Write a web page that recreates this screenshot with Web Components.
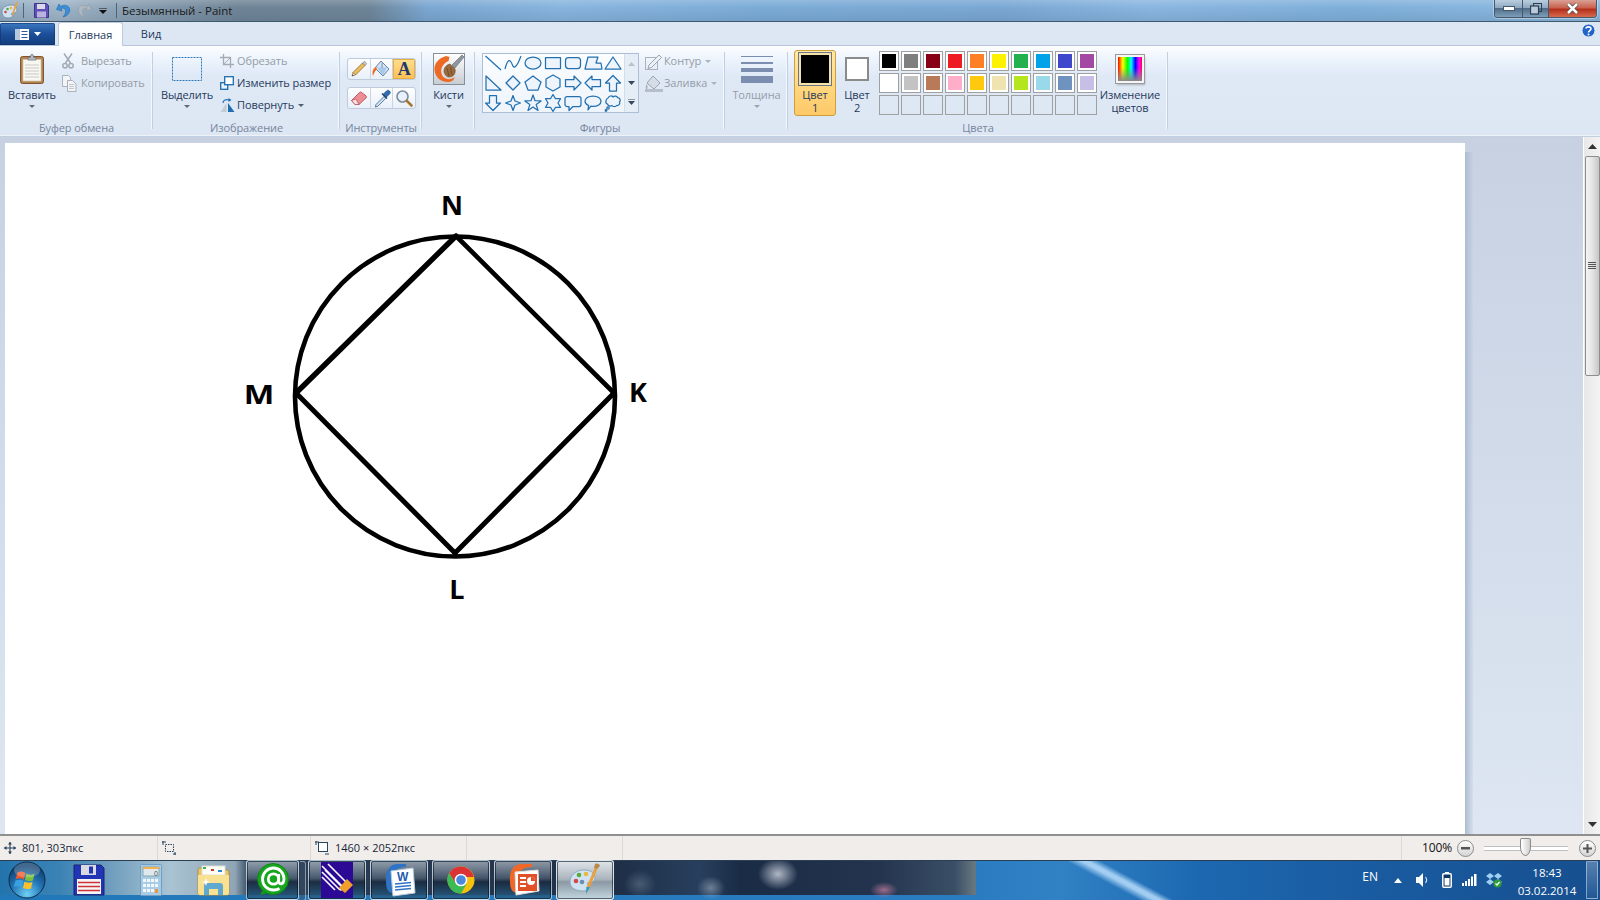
<!DOCTYPE html>
<html lang="ru"><head><meta charset="utf-8"><title>Paint</title>
<style>html,body{margin:0;padding:0;width:1600px;height:900px;overflow:hidden;background:#dde7f4}</style></head>
<body>
<paint-app>
  <title-bar></title-bar>
  <ribbon-tabs></ribbon-tabs>
  <paint-ribbon>
    <rb-group label="Буфер обмена" w="153" pad="8">
      <rb-big label="Вставить" w="48" arrow><x-icon name="paste"></x-icon></rb-big>
      <rb-col ml="6">
        <rb-small gap="3" off><x-icon name="cut"></x-icon>Вырезать</rb-small>
        <rb-small gap="3" off><x-icon name="copy"></x-icon>Копировать</rb-small>
      </rb-col>
    </rb-group>
    <rb-group label="Изображение" w="187" pad="8">
      <rb-big label="Выделить" w="52" arrow><x-icon name="select"></x-icon></rb-big>
      <rb-col ml="7">
        <rb-small off><x-icon name="crop"></x-icon>Обрезать</rb-small>
        <rb-small><x-icon name="resize"></x-icon>Изменить размер</rb-small>
        <rb-small drop><x-icon name="rotate"></x-icon>Повернуть</rb-small>
      </rb-col>
    </rb-group>
    <rb-group label="Инструменты" w="82" pad="7"><tool-grid></tool-grid></rb-group>
    <rb-group label="" w="53" pad="0"><rb-big label="Кисти" w="53" arrow><x-icon name="brush"></x-icon></rb-big></rb-group>
    <rb-group label="Фигуры" w="250" pad="7">
      <shape-gallery></shape-gallery>
      <rb-col ml="6">
        <rb-small gap="1" off drop><x-icon name="outline"></x-icon>Контур</rb-small>
        <rb-small gap="1" off drop><x-icon name="fill2"></x-icon>Заливка</rb-small>
      </rb-col>
    </rb-group>
    <rb-group label="" w="63" pad="0"><rb-big label="Толщина" w="63" arrow off><x-icon name="lines"></x-icon></rb-big></rb-group>
    <rb-group label="Цвета" w="380" pad="6">
      <rb-big label="Цвет&#10;1" w="42" active><color-box size="32" fill="#000" sel></color-box></rb-big>
      <rb-big label="Цвет&#10;2" w="42"><color-box size="24" fill="#fff"></color-box></rb-big>
      <color-palette></color-palette>
      <rb-big label="Изменение&#10;цветов" w="66"><rainbow-box></rainbow-box></rb-big>
    </rb-group>
  </paint-ribbon>
  <canvas-area></canvas-area>
  <status-bar></status-bar>
  <task-bar></task-bar>
</paint-app>
<script>
const FONT='"Open Sans","Noto Sans",sans-serif';
const S='stroke="#2270b0" stroke-width="1.25" fill="#eef4fb" stroke-linejoin="round"';
const poly=p=>`<polygon points="${p}" ${S}/>`;
const ICONS={
paste:[24,30,`<rect x=".5" y="2.5" width="23" height="27" rx="2" fill="#b5824e" stroke="#7d5630"/><rect x="3" y="5.5" width="18" height="21.5" fill="#f8f7f1" stroke="#cfc9b8" stroke-width=".7"/><path d="M5 11h14M5 14h14M5 17h14M5 20h14M5 23h14" stroke="#c9c9c9"/><path d="M8 6V3.5h2.5V1.5c0-1.3 3-1.3 3 0v2H16V6z" fill="#b6bcc4" stroke="#6f7680" stroke-width=".8"/>`],
cut:[12,16,`<g fill="none" stroke="#a3aab3" stroke-width="1.5"><path d="M2 .5 8.5 10M10 .5 3.5 10"/><circle cx="3" cy="12.7" r="2.2"/><circle cx="9" cy="12.7" r="2.2"/></g>`],
copy:[15,17,`<g fill="#f3f4f6" stroke="#aab1ba"><path d="M.5.5h6l2 2v9h-8z"/><path d="M5.5 5.5h5l3.5 3.5v7.5H5.5z"/></g><path d="M7 9.5h5M7 11.5h5M7 13.5h5" stroke="#c3c8ce"/>`],
select:[30,24,`<rect x=".5" y=".5" width="29" height="23" fill="none" stroke="#2f78b8" stroke-dasharray="2 1"/>`],
crop:[14,14,`<path d="M3.5 0v10.5H14M0 3.5h10.5V14" fill="none" stroke="#a4abb4" stroke-width="1.3"/><path d="M3.5 10.5 10.5 3.5" stroke="#a4abb4"/>`],
resize:[14,14,`<rect x=".7" y="6.7" width="7" height="6.6" fill="#eaf3fb" stroke="#1e6cb0" stroke-width="1.3"/><rect x="4.7" y=".7" width="8.6" height="8" fill="#fff" stroke="#1e6cb0" stroke-width="1.3"/>`],
rotate:[15,14,`<path d="M8 14V5l6.5 9z" fill="#1f6db3"/><path d="M6.5 14V5L.5 14z" fill="#c5cbd3"/><path d="M3 5C3 2 6 1 9 2" fill="none" stroke="#1f6db3" stroke-width="1.2"/><path d="M8.5 0l3 2-3 2z" fill="#1f6db3"/>`],
pencil:[18,18,`<path d="M3 12.5 12.5 3l2.5 2.5L5.5 15z" fill="#e9bd62" stroke="#9a6a1a" stroke-width=".8"/><path d="M12.5 3l1-1c.6-.6 1.2-.6 1.8 0l.7.7c.6.6.6 1.2 0 1.8l-1 1z" fill="#c9c9c9" stroke="#777" stroke-width=".6"/><path d="M3 12.5 2 16l3.5-1z" fill="#f1dcb8" stroke="#8a6a3a" stroke-width=".6"/><path d="M2 16l.5-1.6 1.1 1.1z" fill="#222"/>`],
bucket:[20,18,`<path d="M9 1 17 9l-6 7L3 8z" fill="#d5e5f5" stroke="#6283a8"/><path d="M5 7.5h10L11 15.5z" fill="#a9c9e8"/><path d="M4.5 7C.5 8 0 12 1 16c1-2 1.5-5 3.5-6z" fill="#f06a23"/><path d="M10 3v5" stroke="#7a8ea6"/>`],
eraser:[18,16,`<path d="M1.5 10.5 9.5 2.5c.7-.7 1.5-.7 2.2 0l4.3 3.4c.7.7.7 1.3 0 2L9 14.5H5z" fill="#ee8d93" stroke="#b05058" stroke-width=".9"/><path d="M1.5 10.5 5 14.5h4L6 9z" fill="#f8dfe0" stroke="#b05058" stroke-width=".7"/>`],
picker:[18,18,`<path d="M3 15.5 11 7.5l1.8 1.8-8 8-2.5.7z" fill="#cfe4f6" stroke="#4e6d8e" stroke-width=".9"/><path d="M10 5.5 13.5 2c1-1 2-1 3 0s1 2 0 3L13 8.5z" fill="#2f6dad" stroke="#1c4678" stroke-width=".7"/><path d="M9 4.5 14 9.5" stroke="#1c4678" stroke-width="1.5"/>`],
zoom:[18,18,`<circle cx="7.5" cy="7.5" r="5.5" fill="#e6f1fb" stroke="#7d8b9a" stroke-width="1.6"/><path d="M11.8 11.8 16.5 16.5" stroke="#a8742f" stroke-width="2.6" stroke-linecap="round"/>`],
brush:[32,32,`<defs><linearGradient id="b" x1="0" y1="0" x2="0" y2="1"><stop offset="0" stop-color="#fff"/><stop offset="1" stop-color="#c7ccd2"/></linearGradient></defs><rect x=".5" y=".5" width="31" height="31" fill="url(#b)" stroke="#8a8f96"/><path d="M13 3C6 5 1 10 1.500 17c.5 7 6 12 13 12 4 0 7-2 7-5-3 3-9 3-12-1-3-5-1-12 6-15l1-4z" fill="#ee6a24"/><path d="M29 2 19 12l3 3L31 4z" fill="#8f96a0" stroke="#5d6570" stroke-width=".6"/><path d="M17 11c-4 1-6 4-6 7 0 2 2 6 5 6 4 0 7-3 6-8z" fill="#9b6a3c" stroke="#6a4523" stroke-width=".6"/><path d="M14 15c1 3 1 5 2 8M18 14c0 3 0 6 1 8" stroke="#6a4523" stroke-width=".8" fill="none"/>`],
outline:[18,17,`<rect x=".5" y="4.5" width="12" height="12" fill="none" stroke="#aab2bc"/><path d="M4 12 14 2l2.5 2.5-10 10-3.5 1z" fill="#eef1f5" stroke="#9aa3ae"/>`],
fill2:[18,17,`<path d="M8 1 15 8l-6 6L2 8z" fill="#d6dde6" stroke="#9aa3ae"/><path d="M1.5 9C.5 11 .5 13 1.5 15 3 13 3 11 1.5 9z" fill="#aab2bc"/><rect x="0" y="14" width="18" height="3" fill="#b7bec8"/>`],
lines:[32,28,`<g fill="#7b8eb0"><rect y="1" width="32" height="1"/><rect y="7" width="32" height="2"/><rect y="13" width="32" height="4"/><rect y="21" width="32" height="7"/></g>`],
s1:[20,20,`<path d="M2.5 3 18 17" stroke="#2270b0" stroke-width="1.25"/>`],
s2:[20,20,`<path d="M2 16C4 8 6 6 8 9s2 7 5 4 4-8 5-10" stroke="#2270b0" stroke-width="1.25" fill="none"/>`],
s3:[20,20,`<ellipse cx="10" cy="10" rx="8" ry="6" ${S}/>`],
s4:[20,20,`<rect x="2.5" y="4.5" width="15" height="11" ${S}/>`],
s5:[20,20,`<rect x="2.5" y="4.5" width="15" height="11" rx="3" ${S}/>`],
s6:[20,20,poly("2,16 5,4 15,4 13,10 18,10 19,16")],
s7:[20,20,poly("10,4 18,16 2,16")],
s8:[20,20,poly("3,3 3,17 18,17")],
s9:[20,20,poly("10,3 17,10 10,17 3,10")],
s10:[20,20,poly("10,3 18,9 15,17 5,17 2,9")],
s11:[20,20,poly("10,2 17,6 17,14 10,18 3,14 3,6")],
s12:[20,20,poly("2.5,6.5 11,6.5 11,3 18,10 11,17 11,13.5 2.5,13.5")],
s13:[20,20,poly("17.5,6.5 9,6.5 9,3 2,10 9,17 9,13.5 17.5,13.5")],
s14:[20,20,poly("10,2.5 17.5,10 13.5,10 13.5,18 6.5,18 6.5,10 2.5,10")],
s15:[20,20,poly("10,17.5 17.5,10 13.5,10 13.5,2.5 6.5,2.5 6.5,10 2.5,10")],
s16:[20,20,poly("10,2.5 12,8 17.5,10 12,12 10,17.5 8,12 2.5,10 8,8")],
s17:[20,20,poly("10,2 12,7.7 18.1,7.9 13.2,11.6 15,17.4 10,14 5,17.4 6.8,11.6 1.9,7.9 8,7.7")],
s18:[20,20,poly("10,1.5 12.5,5.7 17.5,5.7 15,10 17.5,14.3 12.5,14.3 10,18.5 7.5,14.3 2.5,14.3 5,10 2.5,5.7 7.5,5.7")],
s19:[20,20,`<path d="M4 3.5h12a2 2 0 0 1 2 2v6a2 2 0 0 1-2 2H10l-4 4v-4H4a2 2 0 0 1-2-2v-6a2 2 0 0 1 2-2z" ${S}/>`],
s20:[20,20,`<path d="M10 3c4.6 0 8 2.2 8 5.2s-3.400 5.200-8 5.200c-.8 0-1.500 0-2.200-.2L5 17l.6-4.500C3.400 11.500 2 10 2 8.200 2 5.200 5.400 3 10 3z" ${S}/>`],
s21:[20,20,`<path d="M5 5c1-2.500 4-2.500 5-1 1.500-1.500 4-1 4.500.5 2.500 0 3.500 3 2 4.500 1 2-1 4-3 3.500-1 1.500-3.500 1.500-4.500 0-1.500 1-4 .5-4.500-1.500C2 10.500 2.500 6 5 5z" ${S}/><circle cx="5" cy="15" r="1.200" ${S}/><circle cx="3" cy="17.500" r=".8" ${S}/>`],
orb:[38,38,`<defs><radialGradient id="o" cx=".5" cy=".9" r=".8"><stop offset="0" stop-color="#6fd0f5"/><stop offset=".55" stop-color="#2274b5"/><stop offset="1" stop-color="#0f3e6e"/></radialGradient></defs><circle cx="19" cy="19" r="18" fill="url(#o)" stroke="#0e2c4a"/><path d="M9.500 11.500c3-1.500 5-1 8 .5l-1.800 6.500c-3-1.500-5-1.500-8-.5z" fill="#f05a28"/><path d="M18.500 12.500c3 1.500 5 1.500 8 .3L25 19.500c-3 1-5.500.7-8-.5z" fill="#7bbf3f"/><path d="M7.500 19.500c3-1 5-1 8 .5l-1.800 6.500c-3-1.500-5-1.500-8-.5z" fill="#3aa0e0"/><path d="M16.500 20.500c3 1.500 5 1.500 8 .5l-1.500 6.500c-3 1-5.500.7-8-.5z" fill="#f8c22d"/><ellipse cx="19" cy="9" rx="13" ry="7.500" fill="#fff" opacity=".22"/>`],
floppy:[32,32,`<path d="M1 1h27l3 3v27H1z" fill="#2135b5" stroke="#1a2570"/><rect x="8" y="1" width="15" height="10" fill="#d8dce2"/><rect x="16" y="2.500" width="4" height="7" fill="#2135b5"/><rect x="4" y="15" width="24" height="15" fill="#f5f5f5"/><path d="M5 18.500h22M5 22.500h22M5 26.500h22" stroke="#d03038" stroke-width="1.300"/>`],
calc:[22,32,`<rect x=".5" y=".5" width="21" height="31" rx="1" fill="#a8cbe6" stroke="#6f9fc5"/><rect x="3" y="3" width="16" height="9" fill="#dfe8ee" stroke="#8aa"/><rect x="3" y="3" width="16" height="2" fill="#f2b050"/><text x="14" y="11.500" font-family="Liberation Sans" font-size="7" fill="#555">0</text><g fill="#f2f7fb"><rect x="3" y="15" width="3" height="3"/><rect x="7" y="15" width="3" height="3"/><rect x="11" y="15" width="3" height="3"/><rect x="3" y="20" width="3" height="3"/><rect x="7" y="20" width="3" height="3"/><rect x="11" y="20" width="3" height="3"/><rect x="3" y="25" width="3" height="3"/><rect x="7" y="25" width="3" height="3"/><rect x="11" y="25" width="3" height="3"/><rect x="15" y="15" width="3" height="3"/><rect x="15" y="20" width="3" height="3"/></g><rect x="15" y="25" width="3" height="4" fill="#e89a3c"/>`],
folder:[33,32,`<path d="M1 6c0-1 .5-2 2-2h8l2 2h17c1 0 2 1 2 2v21c0 1-1 2-2 2H3c-1 0-2-1-2-2z" fill="#e9c667" stroke="#b08f3e"/><rect x="5" y="2" width="23" height="9" fill="#fdfdf6" stroke="#ddd"/><rect x="6" y="3" width="3" height="2" fill="#3db04a"/><rect x="14" y="5" width="3" height="2" fill="#c23a30"/><rect x="21" y="6" width="4" height="2" fill="#2b86cf"/><path d="M1 11h31v18c0 1-1 2-2 2H3c-1 0-2-1-2-2z" fill="#f8e193"/><path d="M10 19h13a3 3 0 0 1 3 3v9h-5v-6h-9v6H7v-9a3 3 0 0 1 3-3z" fill="#5fa9cf"/><path d="M9 14l1 3 3 1-3 1-1 3-1-3-3-1 3-1z" fill="#fff"/>`],
mail:[34,34,`<path d="M7 27 4 32l8-2z" fill="#169a1c"/><circle cx="17" cy="16" r="15.500" fill="#18a51f"/><circle cx="17" cy="16" r="15.500" fill="none" stroke="#0f8615"/><circle cx="17.500" cy="16" r="5.200" fill="none" stroke="#fff" stroke-width="2.800"/><path d="M22.700 11v7c0 4 5.300 4 5.300-2 0-6-4.500-11-10.500-11S6.500 10 6.500 16s4.500 11 11 11c2.500 0 4.500-.5 6-1.500" fill="none" stroke="#fff" stroke-width="2.800"/>`],
clip:[32,36,`<rect width="32" height="36" fill="#2d0a96"/><g fill="none" stroke="#fff" stroke-width="1.600"><path d="M1 4 20 23c3 3 7-1 4-4L7 2"/><path d="M1 10 18 27c2 2 4 0 3-2L4 8"/><path d="M1 15 14 28"/></g><path d="M18 26 26 17l6 6-8 8z" fill="#f0a028"/>`],
word:[32,34,`<path d="M3 18C2 7 7 1 15 1h8v3C12 4 8 10 10 30 5 30 3 26 3 18z" fill="#2f73c5"/><path d="M8 8 30 5l2 25-22 3z" fill="#fff" stroke="#bcd"/><text x="14" y="18" font-family="Liberation Sans" font-weight="700" font-size="12" fill="#1f5cb0">W</text><path d="M12 21l16-1.500M12 24l16-1.500M12 27l16-1.500" stroke="#2f73c5" stroke-width="1.500"/>`],
chrome:[28,28,`<circle cx="14" cy="14" r="13.500" fill="#f4c20d"/><path d="M14 .5A13.500 13.500 0 0 0 2.300 7.200L8 17l3-6h15.900A13.500 13.500 0 0 0 14 .5z" fill="#db3236"/><path d="M2.300 7.200A13.500 13.500 0 0 0 14 27.500L19.500 18H9z" fill="#3cba54"/><circle cx="14" cy="14" r="6.300" fill="#fff"/><circle cx="14" cy="14" r="4.800" fill="#4a88e0"/>`],
ppt:[32,34,`<path d="M3 18C2 7 7 1 15 1h10v3C13 4 9 10 11 30 5 30 3 26 3 18z" fill="#f0672a"/><path d="M8 9 31 7l1 21-23 4z" fill="#fff" stroke="#ddd"/><rect x="11" y="11" width="19" height="17" fill="#e2502a"/><path d="M13 15h6M13 19h6M13 23h6" stroke="#fff" stroke-width="1.800"/><circle cx="24" cy="18" r="4" fill="#fff"/><path d="M24 18v-4a4 4 0 0 1 4 4z" fill="#e2502a"/>`],
palette:[34,34,`<path d="M2 19C2 11 10 6 18 7c6 .5 9 4 9 8 0 3-3 4-5 4-3 0-3 2-1 4 1 2-1 5-6 5C8 28 2 25 2 19z" fill="#cfe2f2" stroke="#8fa9c0"/><circle cx="8" cy="18" r="2.300" fill="#d04a4a"/><circle cx="11" cy="12" r="2.300" fill="#5ba83f"/><circle cx="18" cy="11" r="2.300" fill="#e8b93a"/><circle cx="14" cy="19" r="2.300" fill="#6b8fb0"/><path d="M31 2 22 24l-4 7 .5-7L28 2z" fill="#e8a040"/><path d="M27 1c2-1 5 0 5 2l-3 3-3-1z" fill="#b88a50"/><path d="M22 24l-4 7 .5-7z" fill="#2aa0d0"/>`],
help:[15,15,`<circle cx="7.500" cy="7.500" r="6.500" fill="#2263c8" stroke="#dbe7f7"/><path d="M5 5.500C5 3.500 10 3 10 5.700c0 2-2.500 1.800-2.500 3.800" fill="none" stroke="#fff" stroke-width="1.600"/><circle cx="7.500" cy="11.600" r="1" fill="#fff"/>`],
appicon:[18,18,`<path d="M1 10C1 6 5 3 10 3c4 0 6 2 6 5 0 2-2 3-4 3s-2 1-1 2 0 3-4 3c-4 0-6-3-6-6z" fill="#cfe2f2" stroke="#6f8ca5" stroke-width=".8"/><circle cx="4.500" cy="10" r="1.300" fill="#d04a4a"/><circle cx="6.500" cy="7" r="1.300" fill="#5ba83f"/><circle cx="10" cy="6" r="1.300" fill="#e8b93a"/><path d="M17 0 13 11l-2 4 .3-4L15 0z" fill="#e8a040"/>`],
save:[15,15,`<path d="M.5.500h12l2 2v12H.500z" fill="#5f51b8" stroke="#3e3488"/><rect x="3" y="1" width="8" height="5" fill="#d9d9ea"/><rect x="3" y="8.500" width="9" height="6" fill="#b9b2dd"/>`],
undo:[14,15,`<path d="M3 1 .5 6.500 6 8 5 5.500c4-1.500 6 2 3.500 6.500L7 14c6-1.500 8-6 6-9.500C11.500 2 8 1.500 4.500 3.500z" fill="#3d8ed8" stroke="#2569a8" stroke-width=".6"/>`],
redo:[14,15,`<path d="M11 1l2.500 5.500L8 8l1-2.500C5 4 3 7.500 5.500 12L7 14C1 12.500-1 8 1 4.500 2.500 2 6 1.500 9.500 3.500z" fill="#aeb8c2" stroke="#909aa5" stroke-width=".6"/>`],
speaker:[14,16,`<path d="M1 5h3l4-4v14l-4-4H1z" fill="#fff"/><path d="M10.500 5c1.500 2 1.500 4 0 6" fill="none" stroke="#cfe0f0" stroke-width="1.200"/>`],
battery:[10,16,`<rect x="3" y="0" width="4" height="2" fill="#fff"/><rect x=".8" y="1.800" width="8.400" height="13.400" rx="1" fill="#0c3765" stroke="#fff" stroke-width="1.500"/><rect x="2.500" y="6" width="5" height="7.500" fill="#fff"/>`],
signal:[16,12,`<g fill="#fff"><rect x="0" y="9" width="2" height="3"/><rect x="3" y="7" width="2" height="5"/><rect x="6" y="5" width="2" height="7"/><rect x="9" y="2.500" width="2" height="9.500"/><rect x="12" y="0" width="2.500" height="12"/></g>`],
dropbox:[16,16,`<path d="M4 1 8 4 4 7 0 4zM12 1l4 3-4 3-4-3zM4 7l4 3-4 3-4-3zM12 7l4 3-4 3-4-3z" fill="#9fd0f2"/><circle cx="11.500" cy="11.500" r="4" fill="#2e9d3a"/><path d="M9.500 11.500l1.500 1.500 2.500-3" fill="none" stroke="#fff" stroke-width="1.200"/>`],
move:[12,12,`<path d="M6 0v12M0 6h12" stroke="#26455f" stroke-width="1.100"/><path d="M6 0 4 2.500h4zM6 12 4 9.500h4zM0 6l2.500-2v4zM12 6 9.500 4v4z" fill="#26455f"/>`],
selbox:[14,14,`<rect x="3.500" y="3.500" width="8" height="7" fill="none" stroke="#26455f" stroke-dasharray="1.500 1"/><path d="M1 0v4M0 1h4M11 13h3M13 11v3" stroke="#26455f"/>`],
imgbox:[14,14,`<rect x="3.500" y="1.500" width="9" height="9" fill="#fff" stroke="#26455f"/><path d="M1 0v4M0 1h4M10 13h4" stroke="#26455f"/>`],
};
function el(name,css,render){customElements.define(name,class extends HTMLElement{connectedCallback(){if(this.shadowRoot)return;const r=this.attachShadow({mode:'open'});r.innerHTML=`<style>${typeof css==='function'?css(this):css}</style>`+(typeof render==='function'?render(this):render)}})}
const ic=(n,extra='')=>`<x-icon name="${n}" ${extra}></x-icon>`;
el('x-icon',':host{display:inline-flex;line-height:0;flex:none}svg{display:block;overflow:visible}',h=>{const i=ICONS[h.getAttribute('name')];return `<svg xmlns="http://www.w3.org/2000/svg" width="${i[0]}" height="${i[1]}" viewBox="0 0 ${i[0]} ${i[1]}">${i[2]}</svg>`});
el('paint-app',`:host{display:flex;flex-direction:column;width:1600px;height:900px;overflow:hidden;font:11px/14px ${FONT};color:#1e395b;background:#dde7f4}`,'<slot></slot>');
el('title-bar',`:host{display:flex;align-items:center;height:21px;border-bottom:1px solid #3f5a70;flex:none;position:relative;color:#1a1a1a;font-size:11.5px;
background:linear-gradient(180deg,rgba(255,255,255,.18),rgba(255,255,255,0) 35%,rgba(40,60,80,.12)),linear-gradient(90deg,#93adc2 0,#a0b6c8 60px,#8aa0b3 130px,#6f8496 240px,#6e8598 370px,#7ba7d1 425px,#88b5de 560px,#7cacd7 760px,#7aa8d4 1000px,#8ab6e0 1150px,#7fb0da 1350px,#8db9e0 1600px)}
.l{display:flex;align-items:center;flex:1;height:21px}.sep{width:1px;height:15px;background:#4e6478}
.t{margin-left:5px}
.w{display:flex;height:17px;margin:0 3px 4px 0;align-self:flex-start;border:1px solid #46586a;border-top:0;border-radius:0 0 4px 4px;overflow:hidden;box-shadow:0 0 0 1px rgba(255,255,255,.35)}
.b{display:flex;align-items:center;justify-content:center;width:27px;background:linear-gradient(#b9cee0 0,#8fa9c1 45%,#4f6c88 50%,#7d9fbb 100%);border-right:1px solid #46586a}
.b.m{width:25px}.b.x{width:47px;border:0;background:linear-gradient(#d9a195 0,#c9624f 45%,#b5301b 55%,#d66a4e 100%)}`,
`<div class="l"><span style="width:1px"></span>${ic('appicon')}<span class="sep" style="margin:0 10px 0 4px"></span>${ic('save')}<span style="width:7px"></span>${ic('undo')}<span style="width:8px"></span>${ic('redo')}<svg width="8" height="7" style="margin:2px 9px 0 7px"><path d="M0 0h8" stroke="#111"/><path d="M0 2h8L4 6z" fill="#111"/></svg><span class="sep"></span><span class="t">Безымянный - Paint</span></div>
<div class="w"><div class="b"><svg width="12" height="5"><rect x=".5" y=".5" width="11" height="4" fill="#fff" stroke="#45586a"/></svg></div><div class="b m"><svg width="12" height="12"><rect x="3.500" y=".5" width="8" height="8" fill="none" stroke="#2c3e50"/><rect x=".5" y="3" width="8" height="8" fill="#b8cadb" stroke="#2c3e50" stroke-width="1.200"/></svg></div><div class="b x"><svg width="13" height="11"><path d="M2 1l9 9M11 1l-9 9" stroke="#4a4a4a" stroke-width="4"/><path d="M2 1l9 9M11 1l-9 9" stroke="#fff" stroke-width="2.500"/></svg></div></div>`);
el('ribbon-tabs',`:host{display:flex;height:23px;flex:none;background:#dde7f4;border-bottom:1px solid #b7c7d9;font-size:11px;align-items:flex-end}
.f{width:55px;height:22px;box-sizing:border-box;display:flex;align-items:center;justify-content:center;gap:5px;background:linear-gradient(#3a78c0,#1c4f98 50%,#123d7c);border-radius:2px 2px 0 0;box-shadow:inset 0 0 0 1px rgba(20,50,110,.6)}
.g{width:65px;height:24px;margin:0 0 -1px 3px;box-sizing:border-box;border:1px solid #bccbdc;border-bottom:0;border-radius:3px 3px 0 0;background:linear-gradient(#fff,#fbfdff);display:flex;align-items:center;justify-content:center;color:#1e395b}
.v{width:56px;height:22px;display:flex;align-items:center;justify-content:center;color:#1e395b}.h{margin:0 4px 4px auto}`,
`<div class="f"><svg width="14" height="11"><rect width="14" height="11" fill="#fff"/><rect x="0" width="5" height="11" fill="#b8c8dc"/><path d="M6.500 2.500h6M6.500 5.500h6M6.500 8.500h6" stroke="#30598f"/></svg><svg width="7" height="4"><path d="M0 0h7L3.500 4z" fill="#fff"/></svg></div><div class="g">Главная</div><div class="v">Вид</div><div class="h">${ic('help')}</div>`);
el('paint-ribbon',`:host{display:flex;flex:none;height:84px;padding-top:6px;border-bottom:1px solid #c3d0e0;box-shadow:inset 0 -1px 0 #eef3fa;letter-spacing:-.1px;background:linear-gradient(#fcfdff 0,#eaf2fc 16px,#dfe9f6 30px,#dde7f4 100%)}`,'<slot></slot>');
el('rb-group',h=>`:host{display:flex;flex-direction:column;flex:none;box-sizing:border-box;width:${h.getAttribute('w')}px;height:84px;background:linear-gradient(#c2cfe0,#c2cfe0) right top/1px 77px no-repeat,linear-gradient(#f4f8fd,#f4f8fd) right 1px top/1px 77px no-repeat}
.c{display:flex;height:68px;padding-left:${h.getAttribute('pad')}px}.l{height:16px;line-height:16px;text-align:center;color:#76859c;white-space:nowrap}`,h=>`<div class="c"><slot></slot></div><div class="l">${h.getAttribute('label')}</div>`);
el('rb-big',h=>{const a=h.hasAttribute('active');return `:host{display:flex;flex-direction:column;align-items:center;flex:none;box-sizing:border-box;width:${h.getAttribute('w')}px;${a?'height:66px;margin-top:-2px;padding-top:1px;border:1px solid #cf9f3c;border-radius:3px;background:linear-gradient(#ffe9ab,#ffd57d 60%,#fdc868);':''}color:${h.hasAttribute('off')?'#959ca6':'#1e395b'}}
.i{height:34px;margin-bottom:2px;display:flex;align-items:center;justify-content:center}.t{line-height:13px;text-align:center;white-space:pre}.a{width:0;height:0;border:3px solid transparent;border-top:3px solid ${h.hasAttribute('off')?'#9aa3ae':'#5b6b80'};border-bottom:0;margin-top:4px}`},
h=>`<div class="i"><slot></slot></div><div class="t">${h.getAttribute('label')}</div>${h.hasAttribute('arrow')?'<div class="a"></div>':''}`);
el('rb-col',h=>`:host{display:flex;flex-direction:column;flex:none;margin:-2px 0 0 ${h.getAttribute('ml')}px}`,'<slot></slot>');
el('rb-small',h=>`:host{display:flex;align-items:center;height:22px;gap:${h.getAttribute('gap')||1}px;white-space:nowrap;color:${h.hasAttribute('off')?'#959ca6':'#1e395b'}}
::slotted(x-icon){min-width:16px}.a{width:0;height:0;border:3px solid transparent;border-top:3px solid ${h.hasAttribute('off')?'#aab2bc':'#4e5d70'};border-bottom:0;margin:1px 0 0 3px}`,h=>`<slot></slot>${h.hasAttribute('drop')?'<span class="a"></span>':''}`);
const cell=(n,on)=>`<div class="c${on?' on':''}">${n}</div>`;
el('tool-grid',`:host{display:flex;flex-direction:column;gap:7px;margin-top:6px}
.r{display:flex;width:69px;height:22px;box-sizing:border-box;border:1px solid #bdcbdd;border-radius:3px;background:linear-gradient(#fdfeff,#e9f0f9);overflow:hidden}
.c{flex:1;display:flex;align-items:center;justify-content:center;border-right:1px solid #c9d5e5}.c:last-child{border:0}.on{background:linear-gradient(#ffdf8f,#fdbf52);box-shadow:inset 0 0 0 1px #e8ad45}
.A{font:700 18px/20px "Liberation Serif",serif;color:#1d3a70}`,
`<div class="r">${cell(ic('pencil'))}${cell(ic('bucket'))}${cell('<span class="A">A</span>',1)}</div><div class="r">${cell(ic('eraser'))}${cell(ic('picker'))}${cell(ic('zoom'))}</div>`);
el('shape-gallery',`:host{display:flex;flex:none;width:157px;height:60px;box-sizing:border-box;margin-top:1px;border:1px solid #aebfd5;background:linear-gradient(#fbfdff,#eef4fb)}
.g{display:grid;grid-template-columns:repeat(7,20px);grid-auto-rows:20px;width:142px;margin-top:-1px}
.g x-icon{width:20px;height:20px}.s{display:flex;flex-direction:column;width:13px;border-left:1px solid #d3deeb;background:#e5edf7}.s div{flex:1;display:flex;align-items:center;justify-content:center}`,
`<div class="g">${Array.from({length:21},(_,i)=>ic('s'+(i+1))).join('')}</div><div class="s"><div><svg width="7" height="4"><path d="M0 4h7L3.500 0z" fill="#b8c2ce"/></svg></div><div><svg width="7" height="4"><path d="M0 0h7L3.500 4z" fill="#37475c"/></svg></div><div><svg width="7" height="7"><path d="M0 0h7" stroke="#37475c"/><path d="M0 2h7L3.500 6z" fill="#37475c"/></svg></div></div>`);
el('color-box',h=>`:host{display:block;box-sizing:border-box;width:${h.getAttribute('size')}px;height:${h.getAttribute('size')}px;background:${h.getAttribute('fill')};border:${h.hasAttribute('sel')?'2px solid #f6e1a8;outline:1px solid #6c7689':'2px solid #8b8b8b;box-shadow:inset 0 0 0 1px #fff'}}`,'');
const PAL=['#000','#7f7f7f','#880015','#ed1c24','#ff7f27','#fff200','#22b14c','#00a2e8','#3f48cc','#a349a4','#fff','#c3c3c3','#b97a57','#ffaec9','#ffc90e','#efe4b0','#b5e61d','#99d9ea','#7092be','#c8bfe7',...Array(10).fill(null)];
el('color-palette',`:host{display:grid;flex:none;grid-template-columns:repeat(10,20px);grid-auto-rows:20px;gap:2px;margin:-1px 0 0 1px;height:64px}
div{box-sizing:border-box;border:1px solid #a0a0a0}`,PAL.map(c=>c?`<div style="background:${c};box-shadow:inset 0 0 0 1px #fff,inset 0 0 0 2px #fff"></div>`:'<div></div>').join(''));
el('rainbow-box',`:host{display:block;box-sizing:border-box;width:28px;height:28px;border:2px solid #f5f5f5;outline:1px solid #9a9a9a;box-shadow:1px 2px 2px rgba(0,0,0,.25);background:linear-gradient(transparent 45%,#8a8a8a 100%),linear-gradient(90deg,#f00,#ff0 20%,#0f0 40%,#0ff 55%,#00f 72%,#f0f 88%,#f04)}`,'');
el('canvas-area',`:host{display:flex;flex:1;min-height:0;background:linear-gradient(#c7d1e2,#dde6f2)}
.m{display:flex;flex:1;padding:6px 0 0 5px;min-width:0;overflow:hidden}
.p{position:relative;width:1460px;background:#fff;flex:none}.sh{width:8px;margin-top:9px;background:linear-gradient(90deg,#aebcd1,rgba(190,203,222,.25))}
.p svg{position:absolute;left:0;top:0}
.lb{position:absolute;font:700 27px/30px "Open Sans",sans-serif;color:#000;transform:translate(-50%,-50%)}
.sb{display:flex;flex-direction:column;align-items:center;width:16px;border-left:1px solid #fff;background:linear-gradient(90deg,#e8e8e8,#f3f3f3)}
.ar{height:19px;display:flex;align-items:center;justify-content:center}
.th{box-sizing:border-box;width:15px;height:220px;border:1px solid #8d8d8d;border-radius:2px;background:linear-gradient(90deg,#f4f4f4,#e6e6e6 45%,#c6c6c6);display:flex;align-items:center;justify-content:center}
.f{flex:1}`,
`<div class="m"><div class="p"><svg width="1460" height="691" viewBox="5 143 1460 691"><circle cx="455" cy="396.500" r="160" fill="none" stroke="#000" stroke-width="4.600"/><g stroke="#000" stroke-linecap="round" fill="none"><path d="M456 236 296 393" stroke-width="5.400"/><path d="M456 236 614 393" stroke-width="4.600"/><path d="M614 393 455 553" stroke-width="5"/><path d="M296 393 455 553" stroke-width="5"/></g></svg>
<span class="lb" style="left:447px;top:62px">N</span><span class="lb" style="left:254px;top:251px;transform:translate(-50%,-50%) scaleX(1.2)">M</span><span class="lb" style="left:633px;top:249px">K</span><span class="lb" style="left:452px;top:446px">L</span></div><div class="sh"></div></div>
<div class="sb"><div class="ar"><svg width="9" height="5"><path d="M0 5h9L4.500 0z" fill="#333"/></svg></div><div class="th"><svg width="8" height="8"><path d="M0 .5h8M0 2.500h8M0 4.500h8M0 6.500h8" stroke="#555"/></svg></div><div class="f"></div><div class="ar"><svg width="9" height="5"><path d="M0 0h9L4.500 5z" fill="#333"/></svg></div></div>`);
el('status-bar',`:host{display:flex;flex:none;height:24px;border-top:2px solid #8f8f8f;background:#f1edeb;color:#14263a;font-size:11px;align-items:stretch}
.s{display:flex;align-items:center;flex:none;box-sizing:border-box;border-right:1px solid #dcd8d6;padding-left:4px;gap:5px}
.z{display:flex;align-items:center;flex:1;padding-left:20px;font-size:12px;color:#111}
.r{width:17px;height:17px;box-sizing:border-box;border-radius:50%;border:1px solid #8c8c8c;background:linear-gradient(#fff,#d4d4d4);display:flex;align-items:center;justify-content:center;flex:none}
.sl{position:relative;width:84px;height:3px;margin:0 11px 0 10px;border:1px solid #bfbfbf;border-width:1px 0;background:#fff}
.k{position:absolute;left:36px;top:-9px;width:9px;height:16px;border:1px solid #8a8a8a;border-radius:2px 2px 50% 50%;background:linear-gradient(90deg,#fff,#cfcfcf)}`,
`<div class="s" style="width:158px">${ic('move')}<span style="margin-left:1px">801, 303пкс</span></div><div class="s" style="width:153px">${ic('selbox')}</div><div class="s" style="width:156px">${ic('imgbox')}<span style="margin-left:1px">1460 × 2052пкс</span></div><div class="s" style="width:156px"></div><div class="s" style="width:779px"></div>
<div class="z"><span style="width:29px;margin-right:6px;letter-spacing:-.1px">100%</span><div class="r"><svg width="9" height="3"><rect width="9" height="2.500" fill="#555"/></svg></div><div class="sl"><div class="k"></div></div><div class="r"><svg width="9" height="9"><path d="M0 4.500h9M4.500 0v9" stroke="#555" stroke-width="2"/></svg></div></div>`);
el('task-btn',h=>`:host{display:flex;align-items:center;justify-content:center;flex:none;box-sizing:border-box;height:40px;width:${h.getAttribute('w')}px;${h.hasAttribute('run')?`margin-left:4px;border:1px solid rgba(235,245,250,.65);outline:1px solid rgba(5,15,30,.6);outline-offset:-2px;border-radius:3px;background:${h.hasAttribute('on')?'linear-gradient(#dfe6ea,#aab4bc 48%,#8b99a4 55%,#c3d6df)':'linear-gradient(rgba(235,240,245,.55),rgba(120,135,150,.4) 45%,rgba(25,40,60,.75) 55%,rgba(40,100,140,.85))'}`:''}}`,'<slot></slot>');
el('task-bar',`:host{display:flex;flex:none;height:40px;border-top:0;box-sizing:border-box;color:#fff;overflow:hidden;
background:
linear-gradient(28deg,transparent 535px,rgba(175,215,248,.9) 542px,rgba(175,215,248,.9) 545px,transparent 551px),
radial-gradient(20px 16px at 778px 14px,rgba(225,230,240,.75),transparent),radial-gradient(14px 12px at 711px 28px,rgba(180,195,210,.5),transparent),radial-gradient(14px 8px at 884px 30px,rgba(205,130,165,.7),transparent),radial-gradient(16px 14px at 640px 24px,rgba(110,130,150,.5),transparent),
linear-gradient(90deg,#2374ac 0,#3b83b5 60px,#6f9dbd 110px,#a9c3d2 170px,#8fa5b5 235px,#2a4058 250px,#1f2f48 620px,#27405e 700px,#1a2b45 740px,#24344f 880px,#3a4f66 955px,#66757f 974px) 0 0/976px 35px no-repeat,
linear-gradient(90deg,#2178b8 0,#2a7cc0 976px,#3181c5 1060px,#1c68b0 1200px,#1a5da3 1340px,#164f8f 1600px);box-shadow:inset 0 1px 0 #2a3f55}
.ex{width:5px;height:38px;margin:1px 0 0 1px;border:1px solid rgba(220,235,245,.5);border-left:0;border-radius:0 3px 3px 0;background:rgba(60,80,100,.5)}
.tr{margin-left:auto;display:flex;align-items:center;height:40px;position:relative}
.cl{width:64px;text-align:center;line-height:18px;font-size:11.5px;margin:3px 0 0 13px}
.sd{width:12px;height:38px;box-sizing:border-box;margin:0 2px 0 7px;border:1px solid rgba(200,220,240,.55);border-radius:1px;background:linear-gradient(rgba(255,255,255,.28),rgba(255,255,255,.05))}`,
`<task-btn w="54">${ic('orb')}</task-btn><span style="width:4px"></span><task-btn w="62">${ic('floppy')}</task-btn><task-btn w="62">${ic('calc')}</task-btn><task-btn w="62">${ic('folder')}</task-btn>
<task-btn w="53" run style="margin-left:2px">${ic('mail')}</task-btn><span class="ex"></span><task-btn w="58" run style="margin-left:2px">${ic('clip')}</task-btn><task-btn w="58" run>${ic('word')}</task-btn><task-btn w="58" run>${ic('chrome')}</task-btn><task-btn w="58" run>${ic('ppt')}</task-btn><task-btn w="58" run on>${ic('palette')}</task-btn>
<div class="tr"><span style="font-size:12px;margin-bottom:6px">EN</span><svg width="8" height="5" style="margin:0 13px 0 16px"><path d="M0 5h8L4 0z" fill="#fff"/></svg>${ic('speaker')}<span style="width:13px"></span>${ic('battery')}<span style="width:10px"></span>${ic('signal')}<span style="width:8px"></span>${ic('dropbox')}<div class="cl">18:43<br>03.02.2014</div><div class="sd"></div></div>`);
</script>
</body></html>
